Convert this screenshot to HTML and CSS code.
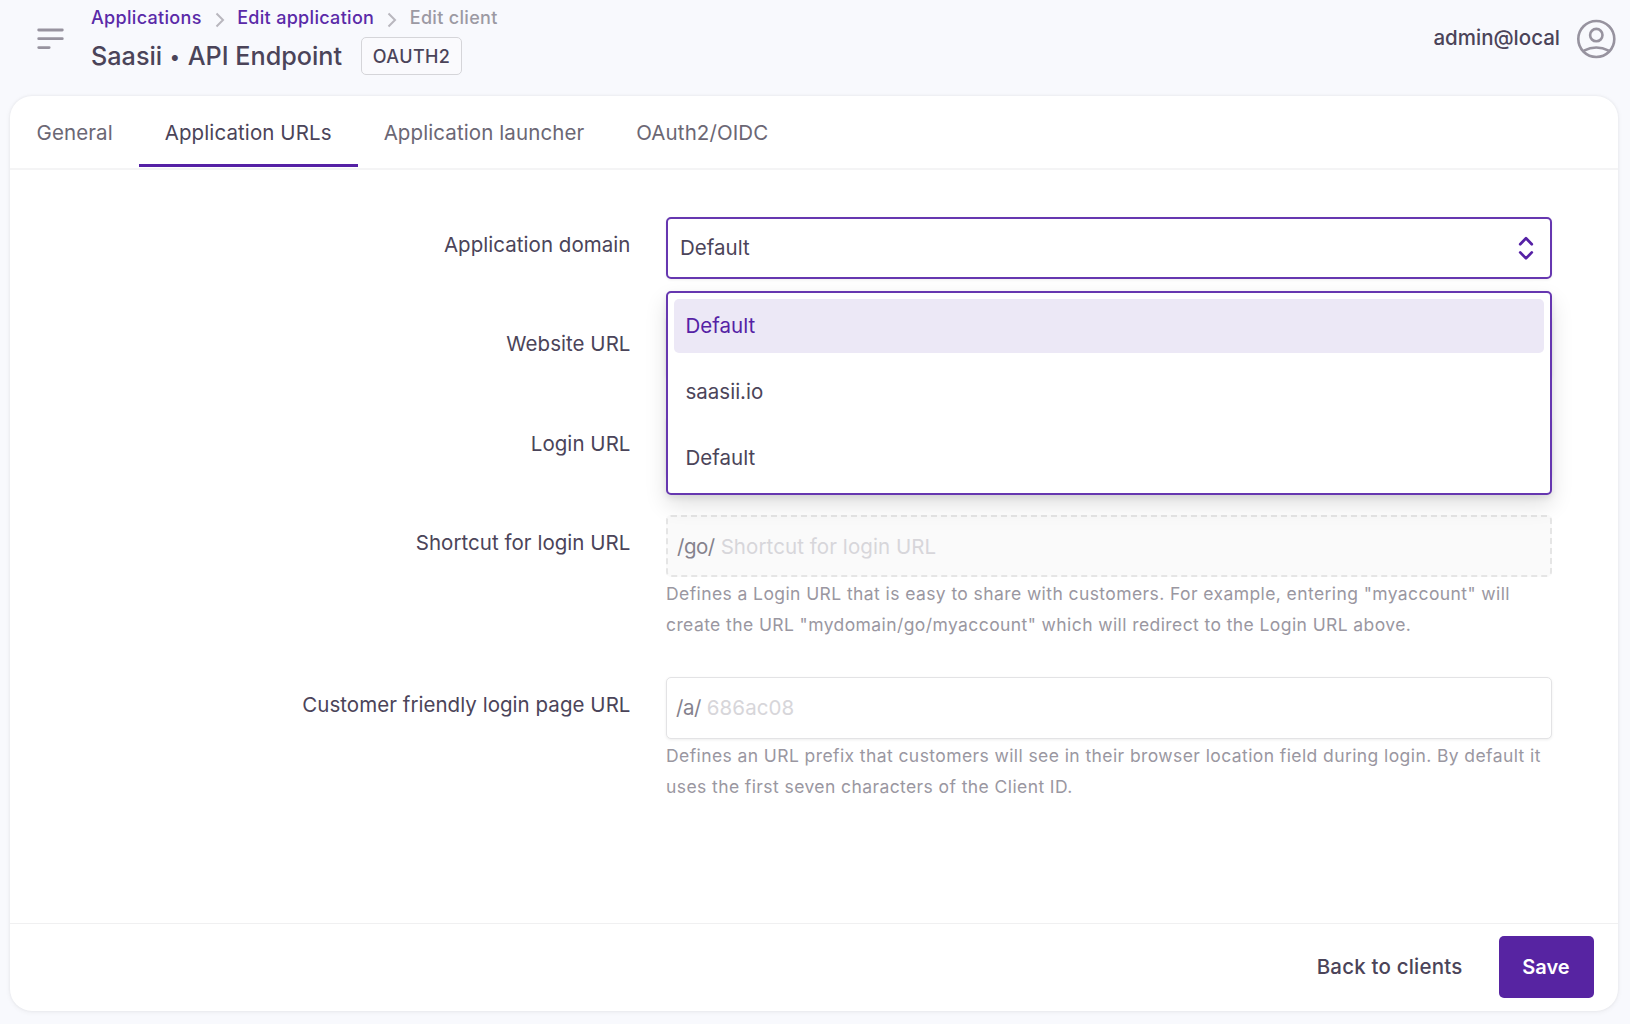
FILE: index.html
```html
<!DOCTYPE html>
<html lang="en">
<head>
<meta charset="utf-8">
<title>Edit client</title>
<link rel="stylesheet" href="styles.css">
</head>
<body>
<header class="topbar">
  <svg class="menu-icon" width="27" height="22" viewBox="0 0 27 22" fill="none" stroke="#97939f" stroke-width="2.8" stroke-linecap="round"><path d="M1.7 2H25.3M1.7 10.7H25.3M1.7 19.6H12.2"/></svg>
  <div class="heading">
    <nav class="crumbs">
      <a class="crumb">Applications</a>
      <svg class="sep" width="10" height="16" viewBox="0 0 10 16" fill="none" stroke="#b9b7be" stroke-width="2"><path d="M1.5 1.5L8 8L1.5 14.5"/></svg>
      <a class="crumb">Edit application</a>
      <svg class="sep" width="10" height="16" viewBox="0 0 10 16" fill="none" stroke="#b9b7be" stroke-width="2"><path d="M1.5 1.5L8 8L1.5 14.5"/></svg>
      <span class="crumb current">Edit client</span>
    </nav>
    <div class="title-row">
      <h1 class="title">Saasii <span class="bullet">•</span> API Endpoint</h1>
      <span class="badge">OAUTH2</span>
    </div>
  </div>
  <div class="user">
    <span class="user-name">admin@local</span>
    <svg width="40" height="40" viewBox="0 0 40 40" fill="none" stroke="#97939f" stroke-width="2.6"><circle cx="20.3" cy="20" r="18"/><circle cx="20.3" cy="16.1" r="6.2"/><path d="M7.9 31.6Q20.3 25.4 32.7 31.6"/></svg>
  </div>
</header>
<main class="card">
  <nav class="tabs">
    <a class="tab general">General</a>
    <a class="tab active">Application URLs</a>
    <a class="tab">Application launcher</a>
    <a class="tab">OAuth2/OIDC</a>
  </nav>
  <form class="form">
    <div class="row">
      <label class="label">Application domain</label>
      <div class="field">
        <div class="input select">
          <span class="value">Default</span>
          <svg width="16" height="25" viewBox="0 0 16 25" fill="none" stroke="#5521a5" stroke-width="2.7" stroke-linecap="round" stroke-linejoin="round"><path d="M2.2 8.2L8 2.2L13.8 8.2M2.2 16.4L8 22.4L13.8 16.4"/></svg>
        </div>
        <ul class="options">
          <li class="option selected">Default</li>
          <li class="option">saasii.io</li>
          <li class="option">Default</li>
        </ul>
      </div>
    </div>
    <div class="row">
      <label class="label">Website URL</label>
      <div class="field"><div class="input"></div></div>
    </div>
    <div class="row">
      <label class="label">Login URL</label>
      <div class="field"><div class="input"></div></div>
    </div>
    <div class="row">
      <label class="label">Shortcut for login URL</label>
      <div class="field">
        <div class="input prefixed disabled"><span class="prefix">/go/</span><span class="placeholder">Shortcut for login URL</span></div>
        <p class="help">Defines a Login URL that is easy to share with customers. For example, entering "myaccount" will<br>create the URL "mydomain/go/myaccount" which will redirect to the Login URL above.</p>
      </div>
    </div>
    <div class="row">
      <label class="label">Customer friendly login page URL</label>
      <div class="field">
        <div class="input prefixed"><span class="prefix">/a/</span><span class="placeholder">686ac08</span></div>
        <p class="help">Defines an URL prefix that customers will see in their browser location field during login. By default it<br>uses the first seven characters of the Client ID.</p>
      </div>
    </div>
  </form>
  <footer class="footer">
    <a class="back">Back to clients</a>
    <button class="save" type="button">Save</button>
  </footer>
</main>
</body>
</html>
```
FILE: styles.css
```css
* { box-sizing: border-box; }
body {
  margin: 0;
  height: 1024px;
  overflow: hidden;
  background: #f8f9fd;
  color: #4b4459;
  font-family: Inter, "Liberation Sans", sans-serif;
  font-size: 20.5px;
  display: flex;
  flex-direction: column;
  white-space: nowrap;
}
.topbar {
  height: 96px;
  flex: none;
  display: flex;
  align-items: flex-start;
  padding: 0 14px 0 37px;
}
.menu-icon { margin-top: 27.5px; flex: none; }
.heading { margin-left: 27px; padding-top: 5px; }
.crumbs { display: flex; align-items: center; height: 24px; }
.crumb { color: #5a2aa8; font-size: 18px; font-weight: 500; letter-spacing: 0.31px; }
.crumb.current { color: #9c99a3; }
.sep { margin: 5px 12.5px 0 13px; }
.title-row { display: flex; align-items: center; height: 54px; }
.title { margin: 0; font-size: 25.2px; font-weight: 500; }
.bullet { font-size: 19px; margin: 0 1px; vertical-align: 1px; }
.badge {
  margin-left: 19px;
  height: 38px;
  width: 101px;
  display: flex;
  align-items: center;
  justify-content: center;
  border: 1.5px solid #d5d5d9;
  border-radius: 5px;
  background: #fafafd;
  font-size: 18px;
  font-weight: 500;
  letter-spacing: 0.4px;
}
.user { margin-left: auto; display: flex; align-items: center; gap: 16px; padding-top: 19px; }
.user-name { font-weight: 500; margin-top: -4px; }
.card {
  margin: 0 12px 0 10px;
  height: 914.5px;
  flex: none;
  display: flex;
  flex-direction: column;
  background: #fff;
  border-radius: 22px;
  box-shadow: 0 0 2px 1px rgba(0, 0, 0, 0.03), 0 1px 5px 1px rgba(0, 0, 0, 0.04);
}
.tabs { display: flex; height: 73.5px; padding-left: 0.5px; border-bottom: 2px solid #f4f4f5; }
.tab {
  padding: 0 26px;
  height: 71.3px;
  line-height: 74px;
  letter-spacing: 0.1px;
  color: #6b6774;
  border-bottom: 3.5px solid transparent;
}
.tab.active { color: #4b4459; border-bottom-color: #5521a5; }
.form {
  flex: 1;
  display: flex;
  flex-direction: column;
  gap: 37px;
  padding: 47.5px 66px 0 0;
}
.row { display: flex; }
.label { width: 620.5px; text-align: right; line-height: 55.4px; letter-spacing: 0.04px; }
.field { position: relative; width: 886px; margin-left: 35.5px; }
.input {
  height: 62.3px;
  display: flex;
  align-items: center;
  border: 1.5px solid #e3e3e5;
  border-radius: 5px;
  background: #fff;
  box-shadow: 0 1px 3px rgba(0, 0, 0, 0.07);
}
.select { justify-content: space-between; padding: 0 16px 0 12px; border: 2px solid #6637b0; }
.value { padding-bottom: 2px; }
.options {
  position: absolute;
  z-index: 1;
  top: 73.5px;
  left: 0;
  right: 0;
  height: 204px;
  margin: 0;
  padding: 6px;
  list-style: none;
  display: flex;
  flex-direction: column;
  gap: 12px;
  border: 2px solid #6637b0;
  border-radius: 5px;
  background: #fff;
  box-shadow: 0 10px 22px rgba(0, 0, 0, 0.12), 0 3px 6px rgba(0, 0, 0, 0.08);
}
.option { height: 54.4px; line-height: 54.4px; padding: 0 11.5px; border-radius: 5px; }
.option.selected { background: #ece8f6; color: #5521a5; }
.prefixed { padding-left: 9px; }
.disabled { background: #fafafa; border: 2px dashed #e5e5e5; box-shadow: none; }
.prefix { color: #85828d; letter-spacing: -0.5px; }
.placeholder { color: #d7d6da; margin-left: 6px; letter-spacing: 0.08px; }
.help {
  margin: 0;
  padding-top: 1px;
  height: 62.4px;
  font-size: 17.5px;
  letter-spacing: 0.41px;
  line-height: 31.2px;
  color: #9a97a1;
}
.footer {
  height: 88px;
  display: flex;
  align-items: center;
  justify-content: flex-end;
  gap: 36px;
  padding: 0 24.5px 1px 0;
  border-top: 1.5px solid #f0f0f1;
}
.back { font-weight: 500; letter-spacing: 0.2px; }
.save {
  width: 95px;
  height: 62px;
  padding: 0;
  border: 0;
  border-radius: 5px;
  background: #5724a2;
  color: #fff;
  font: 600 20px Inter, "Liberation Sans", sans-serif;
}
```
